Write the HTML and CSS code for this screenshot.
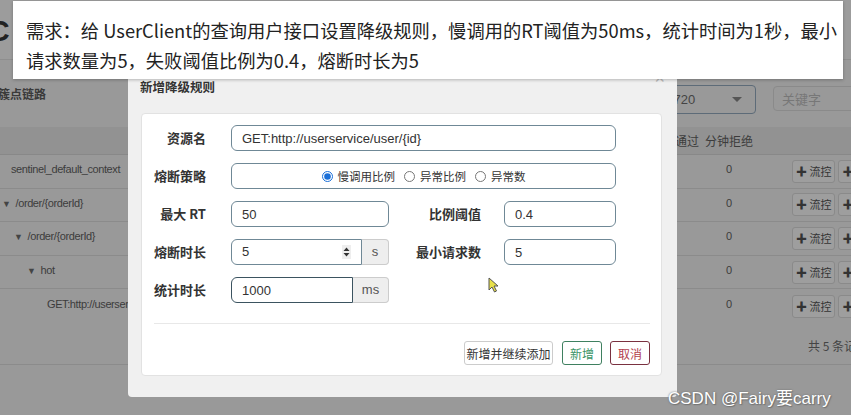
FILE: index.html
```html
<!DOCTYPE html>
<html lang="zh-CN">
<head>
  <meta charset="UTF-8">
  <title>新增降级规则</title>
  <meta name="viewport" content="width=device-width, initial-scale=1" />
  <link rel="stylesheet" href="styles.css">
</head>
<body>

  <div id="page">

    <header class="topbar">
      <span class="brand">C</span>
    </header>

    <div class="toolbar">
      <span class="toolbar-title">簇点链路</span>
      <div class="toolbar-right">
        <div class="fake-select">
          <span class="fake-select-text">192.168.0.1:8720</span>
          <span class="caret"></span>
        </div>
        <div class="fake-search">关键字</div>
      </div>
    </div>

    <div class="res-table">
      <div class="res-row res-head">
        <div></div>
        <div class="col-pass">通过</div>
        <div class="col-num">分钟拒绝</div>
        <div></div>
      </div>
      <div class="res-row">
        <div class="col-name lvl-0">sentinel_default_context</div>
        <div></div>
        <div class="col-num">0</div>
        <div class="col-ops"><span class="op-btn">✚ 流控</span><span class="op-btn">✚ 降级</span></div>
      </div>
      <div class="res-row">
        <div class="col-name lvl-1"><span class="tri">▼</span>/order/{orderId}</div>
        <div></div>
        <div class="col-num">0</div>
        <div class="col-ops"><span class="op-btn">✚ 流控</span><span class="op-btn">✚ 降级</span></div>
      </div>
      <div class="res-row">
        <div class="col-name lvl-2"><span class="tri">▼</span>/order/{orderId}</div>
        <div></div>
        <div class="col-num">0</div>
        <div class="col-ops"><span class="op-btn">✚ 流控</span><span class="op-btn">✚ 降级</span></div>
      </div>
      <div class="res-row">
        <div class="col-name lvl-3"><span class="tri">▼</span>hot</div>
        <div></div>
        <div class="col-num">0</div>
        <div class="col-ops"><span class="op-btn">✚ 流控</span><span class="op-btn">✚ 降级</span></div>
      </div>
      <div class="res-row no-line">
        <div class="col-name lvl-4">GET:http://userservice/user/{id}</div>
        <div></div>
        <div class="col-num">0</div>
        <div class="col-ops"><span class="op-btn">✚ 流控</span><span class="op-btn">✚ 降级</span></div>
      </div>
      <div class="pager">共 5 条记录</div>
    </div>

  </div>

  <!-- dialog over the page -->
  <div class="modal">
    <span class="modal-close">×</span>
    <h3 class="modal-title">新增降级规则</h3>
    <div class="modal-card">
      <form class="rule-form">
        <label class="form-label">资源名</label>
        <div class="wide">
          <input class="form-control" type="text" value="GET:http://userservice/user/{id}">
        </div>

        <label class="form-label">熔断策略</label>
        <div class="wide">
          <div class="form-control radio-box">
            <label class="radio"><input type="radio" name="grade" checked> 慢调用比例</label>
            <label class="radio"><input type="radio" name="grade"> 异常比例</label>
            <label class="radio"><input type="radio" name="grade"> 异常数</label>
          </div>
        </div>

        <label class="form-label">最大 RT</label>
        <div><input class="form-control" type="text" value="50"></div>
        <label class="form-label form-label-r">比例阈值</label>
        <div><input class="form-control" type="text" value="0.4"></div>

        <label class="form-label">熔断时长</label>
        <div class="input-group">
          <div class="form-control spin-box">
            <span>5</span>
            <span class="spinner">
              <svg width="7" height="10" viewBox="0 0 7 10"><path d="M3.5 0.5 L6.5 4 L0.5 4 Z M0.5 6 L6.5 6 L3.5 9.5 Z" fill="#333"/></svg>
            </span>
          </div>
          <span class="addon addon-s">s</span>
        </div>
        <label class="form-label form-label-r">最小请求数</label>
        <div><input class="form-control" type="text" value="5"></div>

        <label class="form-label">统计时长</label>
        <div class="input-group">
          <input class="form-control form-control-focus" type="text" value="1000">
          <span class="addon addon-ms">ms</span>
        </div>
      </form>

      <div class="modal-divider"></div>

      <div class="modal-actions">
        <button class="btn btn-default" type="button">新增并继续添加</button>
        <button class="btn btn-green" type="button">新增</button>
        <button class="btn btn-red" type="button">取消</button>
      </div>
    </div>
  </div>

  <div class="note">
    需求：给 UserClient的查询用户接口设置降级规则，慢调用的RT阈值为50ms，统计时间为1秒，最小<br>
    请求数量为5，失败阈值比例为0.4，熔断时长为5
  </div>

  <svg class="cursor" width="12" height="16" viewBox="0 0 12 16">
    <path d="M1 1 L1 13 L4 10 L6.5 15 L8.5 14 L6 9 L10 9 Z" fill="#e8e04a" stroke="#555" stroke-width="1"/>
  </svg>

  <div class="watermark">CSDN @Fairy要carry</div>

</body>
</html>
```

FILE: styles.css
```css
html,
body {
  margin: 0;
  padding: 0
}

body {
  width: 851px;
  height: 415px;
  overflow: hidden;
  position: relative;
  background: #999;
  font-family: "Liberation Sans", Arial, "Noto Sans CJK SC", sans-serif;
  font-size: 11px;
  color: #3c3c3c
}

#page {
  width: 851px;
  overflow: hidden
}

.topbar {
  height: 60px;
  border-bottom: 1px solid #8e8e8e;
  box-sizing: border-box;
  background: #9c9c9c;
  overflow: hidden
}

.brand {
  display: block;
  margin-left: -12px;
  padding-top: 14px;
  font-size: 30px;
  font-weight: bold;
  color: #222
}

.toolbar {
  display: flex;
  height: 67px;
  box-sizing: border-box;
  padding: 24px 0 0 0
}

.toolbar-title {
  font-size: 12px;
  font-weight: bold;
  line-height: 20px;
  color: #3a3a3a;
  font-family: "Noto Sans CJK SC", sans-serif;
  margin-left: -2px
}

.toolbar-right {
  margin-left: auto;
  margin-right: -22px;
  display: flex;
  gap: 17px
}

.fake-select {
  width: 101px;
  height: 29px;
  margin-top: 1px;
  box-sizing: border-box;
  border: 1px solid #5d6b78;
  border-radius: 4px;
  display: flex;
  align-items: center;
  padding: 0 13px 0 0;
  overflow: hidden;
  font-size: 13px;
  color: #444
}

.fake-select-text {
  margin-left: -62px;
  white-space: nowrap
}

.caret {
  margin-left: auto;
  width: 0;
  height: 0;
  border-left: 5px solid transparent;
  border-right: 5px solid transparent;
  border-top: 5px solid #555
}

.fake-search {
  width: 100px;
  height: 25px;
  margin-top: 2px;
  box-sizing: border-box;
  border: 1px solid #8a8a8a;
  border-radius: 4px;
  padding-left: 8px;
  line-height: 23px;
  font-size: 13px;
  color: #777;
  font-family: "Noto Sans CJK SC", sans-serif
}

.res-table {
  width: 900px
}

.res-row {
  display: grid;
  grid-template-columns: 660px 40px 58px 1fr;
  height: 33.6px;
  align-items: center;
  border-bottom: 1px solid #8b8b8b;
  box-sizing: border-box
}

.res-row.no-line {
  border-bottom: none
}

.res-head {
  height: 28px;
  background: #929292;
  border-bottom-color: #888;
  font-family: "Noto Sans CJK SC", sans-serif;
  font-size: 12px;
  color: #3c3c3c;
  white-space: nowrap
}

.col-pass {
  padding-left: 15px
}

.col-num {
  text-align: center;
  white-space: nowrap
}

.col-name {
  white-space: nowrap;
  margin-top: -4px;
  letter-spacing: -0.4px
}

.res-row .col-num {
  margin-top: -4px
}

.res-head .col-num {
  margin-top: 0
}

.lvl-0 { padding-left: 11px }
.lvl-1 { padding-left: 2px }
.lvl-2 { padding-left: 14px }
.lvl-3 { padding-left: 27px }
.lvl-4 { padding-left: 47px }

.tri {
  font-size: 9px;
  margin-right: 5px;
  color: #444
}

.col-ops {
  display: flex;
  gap: 3px;
  padding-left: 34px
}

.op-btn {
  display: inline-block;
  height: 21px;
  line-height: 21px;
  padding: 0 3px;
  border: 1px solid #8a8a8a;
  border-radius: 3px;
  background: #9e9e9e;
  color: #333;
  font-family: "Noto Sans CJK SC", sans-serif;
  white-space: nowrap
}

.pager {
  height: 41px;
  line-height: 46px;
  border-bottom: 1px solid #8b8b8b;
  padding-left: 808px;
  white-space: nowrap;
  font-family: "Noto Sans CJK SC", sans-serif;
  font-size: 12px;
  color: #444
}

/* dialog */

.modal {
  position: absolute;
  left: 128px;
  top: 70px;
  width: 549px;
  height: 327px;
  box-sizing: border-box;
  background: #f0f0f0;
  border-radius: 0 0 4px 4px;
  padding: 9px 15px 0 13px
}

.modal-close {
  position: absolute;
  right: 12px;
  top: -2px;
  font-size: 18px;
  color: #bbb
}

.modal-title {
  margin: 0 0 18px -1px;
  font-size: 12.5px;
  line-height: 16px;
  font-weight: bold;
  color: #333;
  font-family: "Noto Sans CJK SC", sans-serif
}

.modal-card {
  background: #fff;
  border: 1px solid #e2e2e2;
  border-radius: 4px;
  height: 263px;
  box-sizing: border-box;
  padding-top: 11px
}

.rule-form {
  display: grid;
  grid-template-columns: 89px 158px 115px 112px;
  grid-auto-rows: 26px;
  row-gap: 12px;
  margin: 0
}

.form-label {
  text-align: right;
  padding-right: 25px;
  line-height: 26px;
  font-size: 13px;
  font-weight: bold;
  color: #333;
  font-family: "Noto Sans CJK SC", sans-serif;
  white-space: nowrap
}

.form-label-r {
  padding-right: 23px
}

.wide {
  grid-column: span 3
}

.form-control {
  width: 100%;
  height: 26px;
  box-sizing: border-box;
  border: 1px solid #6f8896;
  border-radius: 6px;
  background: #fff;
  padding: 0 10px;
  font-family: "Liberation Sans", Arial, sans-serif;
  font-size: 13px;
  color: #333;
  outline: none;
  margin: 0
}

.form-control-focus {
  border-color: #3b5360
}

.radio-box {
  display: flex;
  justify-content: center;
  align-items: center;
  gap: 9px
}

.radio {
  display: flex;
  align-items: center;
  gap: 3px;
  font-size: 11.5px;
  color: #333;
  font-family: "Noto Sans CJK SC", sans-serif
}

.radio input {
  width: 11px;
  height: 11px;
  margin: 0 2px 0 0;
  accent-color: #1a6fd8
}

.input-group {
  display: flex
}

.input-group .form-control {
  border-radius: 6px 0 0 6px
}

.spin-box {
  display: flex;
  align-items: center;
  justify-content: space-between;
  line-height: 24px;
  padding-right: 10px;
  width: 131px;
  flex: none
}

.spinner {
  display: flex;
  align-items: center;
  justify-content: center;
  width: 9px;
  height: 14px;
  background: #eee
}

.addon {
  flex: none;
  height: 26px;
  box-sizing: border-box;
  border: 1px solid #ccc;
  border-left: none;
  border-radius: 0 4px 4px 0;
  background: #eee;
  color: #555;
  font-size: 13px;
  line-height: 24px;
  text-align: center
}

.addon-s {
  width: 27px
}

.addon-ms {
  width: 36px
}

.modal-divider {
  height: 1px;
  background: #e8e8e8;
  margin: 20px 11px 0 12px
}

.modal-actions {
  display: flex;
  justify-content: flex-end;
  gap: 8px;
  margin: 17px 11px 0 0
}

.btn {
  height: 24px;
  padding: 0;
  border: 1px solid #ccc;
  border-radius: 3px;
  background: #fff;
  font-size: 12px;
  font-family: "Noto Sans CJK SC", sans-serif;
  cursor: pointer
}

.btn-default {
  width: 89px;
  color: #333;
  margin-right: 1px
}

.btn-green {
  width: 40px;
  border-color: #3f8060;
  color: #3a9467
}

.btn-red {
  width: 40px;
  border-color: #7a3140;
  color: #b2404f
}

/* screenshot overlays */

.note {
  position: absolute;
  left: 13px;
  top: 1px;
  width: 830px;
  height: 78px;
  box-sizing: border-box;
  background: #fff;
  padding: 14px 0 0 13px;
  font-size: 18.3px;
  line-height: 30px;
  color: #222;
  font-family: "Noto Sans CJK SC", sans-serif;
  white-space: nowrap;
  box-shadow: 0 1px 3px rgba(0, 0, 0, 0.25)
}

.cursor {
  position: absolute;
  left: 488px;
  top: 277px
}

.watermark {
  position: absolute;
  left: 668px;
  top: 384px;
  font-size: 17px;
  color: #fff;
  font-family: "Liberation Sans", "Noto Sans CJK SC", sans-serif;
  text-shadow: 0 0 2px #666, 1px 1px 1px #777;
  white-space: nowrap
}
```
